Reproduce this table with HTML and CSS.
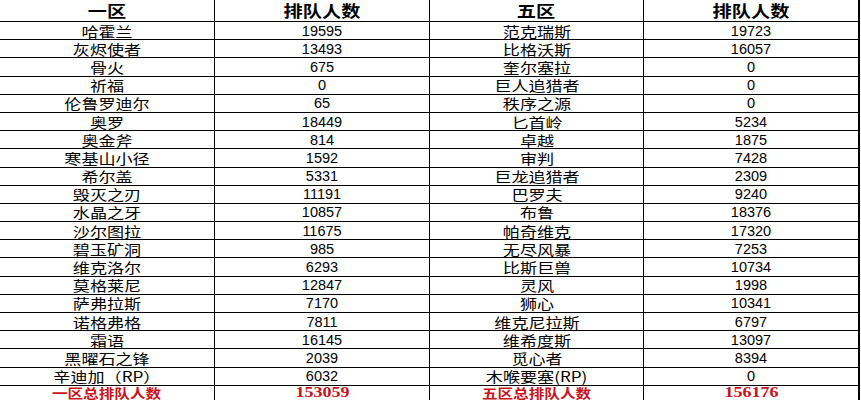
FILE: index.html
```html
<!DOCTYPE html>
<html lang="zh-CN">
<head>
<meta charset="utf-8">
<title>排队人数</title>
<link rel="stylesheet" href="styles.css">
</head>
<body>
<div class="sheet">
  <div class="cell head"><span>一区</span></div><div class="cell head"><span>排队人数</span></div><div class="cell head"><span>五区</span></div><div class="cell head"><span>排队人数</span></div>
  <div class="cell name"><span>哈霍兰</span></div><div class="cell num"><span>19595</span></div><div class="cell name"><span>范克瑞斯</span></div><div class="cell num"><span>19723</span></div>
  <div class="cell name"><span>灰烬使者</span></div><div class="cell num"><span>13493</span></div><div class="cell name"><span>比格沃斯</span></div><div class="cell num"><span>16057</span></div>
  <div class="cell name"><span>骨火</span></div><div class="cell num"><span>675</span></div><div class="cell name"><span>奎尔塞拉</span></div><div class="cell num"><span>0</span></div>
  <div class="cell name"><span>祈福</span></div><div class="cell num"><span>0</span></div><div class="cell name"><span>巨人追猎者</span></div><div class="cell num"><span>0</span></div>
  <div class="cell name"><span>伦鲁罗迪尔</span></div><div class="cell num"><span>65</span></div><div class="cell name"><span>秩序之源</span></div><div class="cell num"><span>0</span></div>
  <div class="cell name"><span>奥罗</span></div><div class="cell num"><span>18449</span></div><div class="cell name"><span>匕首岭</span></div><div class="cell num"><span>5234</span></div>
  <div class="cell name"><span>奥金斧</span></div><div class="cell num"><span>814</span></div><div class="cell name"><span>卓越</span></div><div class="cell num"><span>1875</span></div>
  <div class="cell name"><span>寒基山小径</span></div><div class="cell num"><span>1592</span></div><div class="cell name"><span>审判</span></div><div class="cell num"><span>7428</span></div>
  <div class="cell name"><span>希尔盖</span></div><div class="cell num"><span>5331</span></div><div class="cell name"><span>巨龙追猎者</span></div><div class="cell num"><span>2309</span></div>
  <div class="cell name"><span>毁灭之刃</span></div><div class="cell num"><span>11191</span></div><div class="cell name"><span>巴罗夫</span></div><div class="cell num"><span>9240</span></div>
  <div class="cell name"><span>水晶之牙</span></div><div class="cell num"><span>10857</span></div><div class="cell name"><span>布鲁</span></div><div class="cell num"><span>18376</span></div>
  <div class="cell name"><span>沙尔图拉</span></div><div class="cell num"><span>11675</span></div><div class="cell name"><span>帕奇维克</span></div><div class="cell num"><span>17320</span></div>
  <div class="cell name"><span>碧玉矿洞</span></div><div class="cell num"><span>985</span></div><div class="cell name"><span>无尽风暴</span></div><div class="cell num"><span>7253</span></div>
  <div class="cell name"><span>维克洛尔</span></div><div class="cell num"><span>6293</span></div><div class="cell name"><span>比斯巨兽</span></div><div class="cell num"><span>10734</span></div>
  <div class="cell name"><span>莫格莱尼</span></div><div class="cell num"><span>12847</span></div><div class="cell name"><span>灵风</span></div><div class="cell num"><span>1998</span></div>
  <div class="cell name"><span>萨弗拉斯</span></div><div class="cell num"><span>7170</span></div><div class="cell name"><span>狮心</span></div><div class="cell num"><span>10341</span></div>
  <div class="cell name"><span>诺格弗格</span></div><div class="cell num"><span>7811</span></div><div class="cell name"><span>维克尼拉斯</span></div><div class="cell num"><span>6797</span></div>
  <div class="cell name"><span>霜语</span></div><div class="cell num"><span>16145</span></div><div class="cell name"><span>维希度斯</span></div><div class="cell num"><span>13097</span></div>
  <div class="cell name"><span>黑曜石之锋</span></div><div class="cell num"><span>2039</span></div><div class="cell name"><span>觅心者</span></div><div class="cell num"><span>8394</span></div>
  <div class="cell name"><span>辛迪加（RP）</span></div><div class="cell num"><span>6032</span></div><div class="cell name"><span>木喉要塞(RP)</span></div><div class="cell num"><span>0</span></div>
  <div class="cell total"><span>一区总排队人数</span></div><div class="cell total-num"><span>153059</span></div><div class="cell total"><span>五区总排队人数</span></div><div class="cell total-num"><span>156176</span></div>
</div>
</body>
</html>
```
FILE: styles.css
```css
html, body {
  margin: 0;
  padding: 0;
  background: #ffffff;
}

.sheet {
  display: grid;
  grid-template-columns: 214px 214px 213px 214px;
  grid-template-rows: 21px repeat(20, 17.2px) 20px;
  gap: 1px;
  width: 858px;
  background: #000000;
  border-right: 2px solid #000000;
}

.cell {
  background: #ffffff;
  display: flex;
  align-items: center;
  justify-content: center;
  color: #000000;
  overflow: hidden;
  white-space: nowrap;
  line-height: 16px;
}

.cell span {
  display: inline-block;
}

.head {
  font-family: "Noto Sans CJK SC", sans-serif;
  font-weight: 700;
  font-size: 16px;
  line-height: 19px;
}

.head span {
  transform: scaleX(1.2);
}

.name {
  font-family: "Noto Sans CJK SC", sans-serif;
  font-weight: 400;
  font-size: 14px;
}

.name span {
  transform: scaleX(1.22);
}

.num {
  font-family: "Liberation Sans", Arial, sans-serif;
  font-size: 14.5px;
}

.total {
  font-family: "Noto Sans CJK SC", sans-serif;
  font-weight: 700;
  font-size: 13px;
  line-height: 13px;
  color: #c8141a;
  align-items: flex-start;
}

.total span {
  transform: scaleX(1.2);
}

.total-num {
  font-family: "Liberation Serif", "Times New Roman", serif;
  font-weight: 700;
  font-size: 15px;
  line-height: 13px;
  color: #c8141a;
  align-items: flex-start;
}

.total-num span {
  transform: scaleX(1.2);
}
```
